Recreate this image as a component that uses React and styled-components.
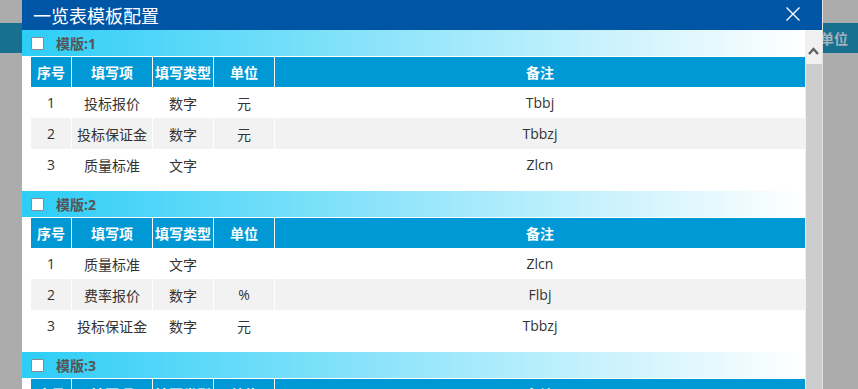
import React from "react";
import styled, { createGlobalStyle } from "styled-components";

const GlobalStyle = createGlobalStyle`
  html, body {
    margin: 0;
    padding: 0;
    background: #acacac;
    overflow: hidden;
  }
  * {
    box-sizing: border-box;
  }
`;

const templates = [
  {
    name: "模版:1",
    rows: [
      ["1", "投标报价", "数字", "元", "Tbbj"],
      ["2", "投标保证金", "数字", "元", "Tbbzj"],
      ["3", "质量标准", "文字", "", "Zlcn"],
    ],
  },
  {
    name: "模版:2",
    rows: [
      ["1", "质量标准", "文字", "", "Zlcn"],
      ["2", "费率报价", "数字", "%", "Flbj"],
      ["3", "投标保证金", "数字", "元", "Tbbzj"],
    ],
  },
  {
    name: "模版:3",
    rows: [
      ["1", "投标报价", "数字", "元", "Tbbj"],
      ["2", "工期", "数字", "天", "Gq"],
      ["3", "质量标准", "文字", "", "Zlcn"],
    ],
  },
];

const columns = ["序号", "填写项", "填写类型", "单位", "备注"];

const App = () => {
  return (
    <>
      <GlobalStyle />
      <Page>
        <BackHeader>
          <span>单位</span>
        </BackHeader>
        <Dialog>
          <TitleBar>
            <Title>一览表模板配置</Title>
            <CloseButton aria-label="关闭">
              <svg width="14" height="14" viewBox="0 0 14 14">
                <path
                  d="M0.5 0.5 L13.5 13.5 M13.5 0.5 L0.5 13.5"
                  stroke="#fff"
                  strokeWidth="1.4"
                  fill="none"
                />
              </svg>
            </CloseButton>
          </TitleBar>
          <Body>
            <List>
              {templates.map((t) => (
                <Section key={t.name}>
                  <SectionHeader>
                    <Check type="checkbox" />
                    <SectionName>{t.name}</SectionName>
                  </SectionHeader>
                  <Table>
                    <Row $head>
                      {columns.map((c) => (
                        <HeadCell key={c}>{c}</HeadCell>
                      ))}
                    </Row>
                    {t.rows.map((r, i) => (
                      <Row key={i}>
                        {r.map((v, j) => (
                          <Cell key={j} $striped={i % 2 === 1}>
                            {v}
                          </Cell>
                        ))}
                      </Row>
                    ))}
                  </Table>
                </Section>
              ))}
            </List>
            <Scrollbar>
              <UpButton>
                <svg width="11" height="8" viewBox="0 0 11 8">
                  <path
                    d="M1 7 L5.5 2 L10 7"
                    stroke="#606060"
                    strokeWidth="2.4"
                    fill="none"
                  />
                </svg>
              </UpButton>
              <Thumb />
            </Scrollbar>
          </Body>
        </Dialog>
      </Page>
    </>
  );
};

const Page = styled.div`
  position: relative;
  width: 858px;
  height: 389px;
  background: #acacac;
  overflow: hidden;
  padding-top: 23px;
  font-family: "Open Sans", "Noto Sans CJK SC", sans-serif;
`;

const BackHeader = styled.div`
  height: 30px;
  background: #17708f;
  display: flex;
  align-items: center;
  justify-content: flex-end;
  padding-right: 10px;

  span {
    color: #a7b4bc;
    font-weight: bold;
    font-size: 14px;
    font-family: "Noto Sans CJK SC", sans-serif;
  }
`;

const Dialog = styled.div`
  position: absolute;
  top: 0;
  left: 22px;
  width: 801px;
  height: 389px;
  background: #fff;
  border-right: 1px solid #e3e3e3;
  display: flex;
  flex-direction: column;
`;

const TitleBar = styled.div`
  height: 30px;
  flex: none;
  background: #0155a5;
  display: flex;
  align-items: center;
  justify-content: space-between;
  padding: 0 22px 0 11px;
`;

const Title = styled.div`
  color: #fff;
  font-size: 18px;
  font-family: "Noto Sans CJK SC", sans-serif;
  line-height: 30px;
`;

const CloseButton = styled.div`
  width: 14px;
  height: 14px;
  display: flex;
  margin-top: -2px;
  cursor: pointer;
`;

const Body = styled.div`
  flex: 1;
  display: flex;
  overflow: hidden;
`;

const List = styled.div`
  width: 783px;
  flex: none;
  overflow: hidden;
`;

const Section = styled.div`
  margin-bottom: 11px;
`;

const SectionHeader = styled.div`
  height: 26px;
  display: flex;
  align-items: center;
  gap: 12px;
  padding-left: 9px;
  background: linear-gradient(to right, #2ccdf6, #ffffff);
`;

const Check = styled.input`
  appearance: none;
  margin: 0;
  width: 13px;
  height: 13px;
  border: 1px solid #8a8a8a;
  background: #fff;
  border-radius: 1px;
`;

const SectionName = styled.span`
  color: #555;
  font-weight: bold;
  font-size: 14px;
`;

const Table = styled.div`
  margin: 1px 0 0 9px;
`;

const Row = styled.div`
  display: grid;
  grid-template-columns: 40px 80px 60px 60px 1fr;
  column-gap: 1px;
  height: ${(p) => (p.$head ? "30px" : "31px")};
  background: #fff;
`;

const HeadCell = styled.div`
  background: #0099d5;
  color: #fff;
  font-weight: bold;
  font-size: 14px;
  display: flex;
  align-items: center;
  justify-content: center;
  white-space: nowrap;
`;

const Cell = styled.div`
  background: ${(p) => (p.$striped ? "#f2f2f2" : "#fff")};
  color: #333;
  font-size: 14px;
  display: flex;
  align-items: center;
  justify-content: center;
  white-space: nowrap;
`;

const Scrollbar = styled.div`
  width: 17px;
  flex: none;
  background: #f0f0f0;
  display: flex;
  flex-direction: column;
`;

const UpButton = styled.div`
  height: 33px;
  display: flex;
  align-items: flex-end;
  justify-content: center;
  padding-bottom: 8px;
`;

const Thumb = styled.div`
  flex: 1;
  margin: 1px 0 0 1px;
  background: #cdcdcd;
`;

export default App;
